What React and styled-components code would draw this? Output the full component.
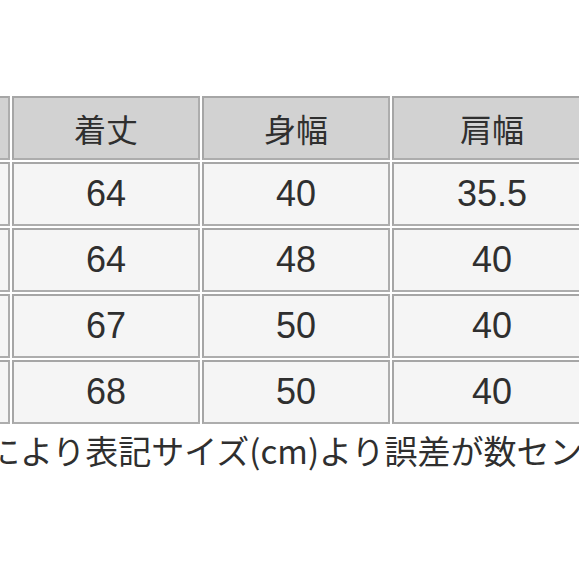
import React from "react";
import styled, { createGlobalStyle } from "styled-components";

const Global = createGlobalStyle`
  html, body { margin: 0; padding: 0; background: #ffffff; }
  body { font-family: "Liberation Sans", Arial, "Noto Sans CJK JP", sans-serif; }
`;

const Page = styled.div`
  width: 579px;
  height: 579px;
  overflow: hidden;
  padding-top: 94px;
  box-sizing: border-box;
  background: #ffffff;
`;

const TableClip = styled.div`
  width: 579px;
  overflow: hidden;
`;

const SizeTable = styled.table`
  table-layout: fixed;
  border-collapse: separate;
  border-spacing: 2px;
  margin-left: -92px;
  width: ${(p) => p.$width}px;
`;

const Cell = styled.td`
  box-sizing: border-box;
  height: 64px;
  padding: 0;
  border: 2px solid #adadad;
  border-top-color: #a6a6a6;
  border-left-color: #a6a6a6;
  background: ${(p) => (p.$head ? "#d2d2d2" : "#f5f5f5")};
  color: #2f2f2f;
  text-align: center;
  vertical-align: middle;
  font-family: ${(p) =>
    p.$head
      ? `"Noto Sans CJK JP", "Liberation Sans", sans-serif`
      : `"Liberation Sans", Arial, sans-serif`};
  font-size: ${(p) => (p.$head ? "32px" : "36px")};
  line-height: 1;
  white-space: nowrap;
`;

const Note = styled.p`
  margin: 4px 0 0 -13px;
  font-family: "Noto Sans CJK JP", "Liberation Sans", sans-serif;
  font-size: 33px;
  line-height: 40px;
  color: #2f2f2f;
  white-space: nowrap;
`;

const widths = [100, 188, 188, 200];
const header = ["", "着丈", "身幅", "肩幅"];
const rows = [
  ["", "64", "40", "35.5"],
  ["", "64", "48", "40"],
  ["", "67", "50", "40"],
  ["", "68", "50", "40"],
];

export default function App() {
  const total = widths.reduce((a, b) => a + b, 0) + 2 * (widths.length + 1);
  return (
    <>
      <Global />
      <Page>
        <TableClip>
          <SizeTable $width={total}>
            <colgroup>
              {widths.map((w, i) => (
                <col key={i} style={{ width: w }} />
              ))}
            </colgroup>
            <tbody>
              <tr>
                {header.map((h, i) => (
                  <Cell key={i} $head>
                    {h}
                  </Cell>
                ))}
              </tr>
              {rows.map((r, ri) => (
                <tr key={ri}>
                  {r.map((v, ci) => (
                    <Cell key={ci}>{v}</Cell>
                  ))}
                </tr>
              ))}
            </tbody>
          </SizeTable>
        </TableClip>
        <Note>により表記サイズ(cm)より誤差が数センチ</Note>
      </Page>
    </>
  );
}
